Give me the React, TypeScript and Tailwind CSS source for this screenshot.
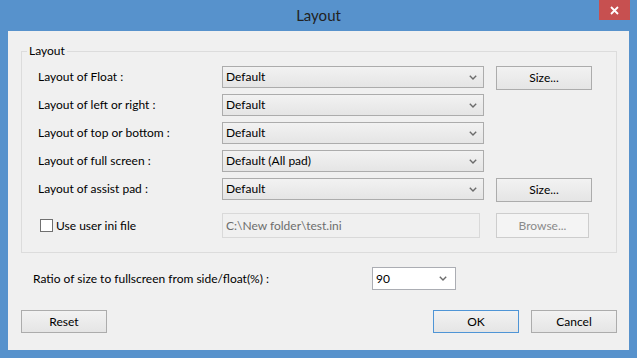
import React from 'react';

const Chevron: React.FC = () => (
  <svg width="8" height="5" viewBox="0 0 8 5" className="shrink-0">
    <path d="M0.8 0.8 L4 4 L7.2 0.8" fill="none" stroke="#6b6b6b" strokeWidth="1.4" />
  </svg>
);

const Combo: React.FC<{ value: string; width: string }> = ({ value, width }) => (
  <div
    className={`${width} h-[22px] flex items-center justify-between pl-[3px] pr-[6px] border border-[#acacac] bg-gradient-to-b from-[#f2f2f2] to-[#e5e5e5]`}
  >
    <span>{value}</span>
    <Chevron />
  </div>
);

const Btn: React.FC<{ label: string; className?: string }> = ({ label, className = '' }) => (
  <button
    className={`flex items-center justify-center border border-[#acacac] bg-gradient-to-b from-[#f2f2f2] to-[#e5e5e5] ${className}`}
  >
    {label}
  </button>
);

const ROWS = [
  { label: 'Layout of Float :', value: 'Default', size: true },
  { label: 'Layout of left or right :', value: 'Default', size: false },
  { label: 'Layout of top or bottom :', value: 'Default', size: false },
  { label: 'Layout of full screen :', value: 'Default (All pad)', size: false },
  { label: 'Layout of assist pad :', value: 'Default', size: true },
];

const App: React.FC = () => {
  return (
    <div className="w-[637px] h-[358px] bg-[#5792cc] flex flex-col font-['Segoe_UI','Lato',sans-serif] text-[12px] text-black">
      {/* title bar */}
      <div className="h-[31px] shrink-0 relative flex justify-center">
        <span className="text-[15px] leading-[31px] text-[#222]">Layout</span>
        <button className="absolute right-[7px] top-0 w-[31px] h-[20px] bg-[#c75050] flex items-center justify-center">
          <svg width="9" height="9" viewBox="0 0 9 9">
            <path d="M1 1 L8 8 M8 1 L1 8" stroke="#fff" strokeWidth="1.8" />
          </svg>
        </button>
      </div>

      {/* client area */}
      <div className="flex-1 mx-2 mb-2 bg-[#f0f0f0] pl-[13px] pr-[12px] pt-[20px] flex flex-col">
        <div className="border border-[#dcdcdc] px-[16px] pb-[14px] flex flex-col">
          <span className="self-start -mt-[9px] -ml-[11px] px-[2px] leading-[16px] bg-[#f0f0f0]">Layout</span>

          <div className="mt-[7px] flex flex-col">
            {ROWS.map((r) => (
              <div key={r.label} className="h-[28px] flex items-start">
                <div className="w-[184px] h-[22px] flex items-center">{r.label}</div>
                <Combo value={r.value} width="w-[262px]" />
                {r.size && <Btn label="Size..." className="ml-[12px] w-[96px] h-[24px]" />}
              </div>
            ))}
          </div>

          <div className="mt-[7px] flex items-center">
            <div className="w-[184px] flex items-center">
              <span className="ml-[2px] w-[13px] h-[13px] border border-[#707070] bg-white" />
              <span className="ml-[3px]">Use user ini file</span>
            </div>
            <div className="w-[258px] h-[25px] border border-[#d9d9d9] bg-[#f0f0f0] flex items-center pl-[3px] text-[#6d6d6d]">
              C:\New folder\test.ini
            </div>
            <button className="ml-[16px] w-[93px] h-[25px] border border-[#cdcdcd] bg-[#f4f4f4] text-[#8a8a8a]">
              Browse...
            </button>
          </div>
        </div>

        <div className="mt-[14px] flex items-center">
          <div className="ml-[12px] w-[339px]">Ratio of size to fullscreen from side/float(%) :</div>
          <div className="w-[84px] h-[23px] flex items-center justify-between pl-[3px] pr-[8px] border border-[#abadb3] bg-white">
            <span>90</span>
            <Chevron />
          </div>
        </div>

        <div className="mt-[20px] flex justify-between">
          <Btn label="Reset" className="w-[86px] h-[23px]" />
          <div className="flex gap-[12px]">
            <Btn label="OK" className="w-[86px] h-[23px] !border-[#4f95d6]" />
            <Btn label="Cancel" className="w-[86px] h-[23px]" />
          </div>
        </div>
      </div>
    </div>
  );
};

export default App;
